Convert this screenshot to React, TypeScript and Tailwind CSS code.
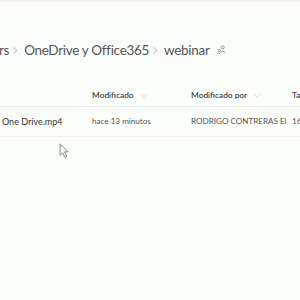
import { ChevronDown } from 'lucide-react';

function Chevron() {
  return <ChevronDown className="ml-[5px] h-[10px] w-[10px] text-[#c4c4c4]" strokeWidth={1.25} />;
}

function Sep() {
  return (
    <svg viewBox="0 0 8 12" className="ml-[4px] mr-[6px] h-[9px] w-[5px] text-[#777]">
      <path d="M1.5 1 L6 6 L1.5 11" fill="none" stroke="currentColor" strokeWidth="1" />
    </svg>
  );
}

function ShareIcon() {
  return (
    <svg viewBox="0 0 12 12" className="ml-[6px] h-[10px] w-[10px] text-[#777]">
      <circle cx="8" cy="3" r="1.8" fill="none" stroke="currentColor" strokeWidth="0.9" />
      <path d="M5 9 Q8 5.5 11 9" fill="none" stroke="currentColor" strokeWidth="0.9" />
      <circle cx="4" cy="6.5" r="1.3" fill="none" stroke="currentColor" strokeWidth="0.9" />
      <path d="M1 11 Q3 8.5 5 10" fill="none" stroke="currentColor" strokeWidth="0.9" />
    </svg>
  );
}

function Cursor() {
  return (
    <svg viewBox="0 0 12 18" className="absolute left-[59px] top-[143px] h-[16px] w-[11px]">
      <path d="M1 1 L1 14 L4 11 L6.5 16 L8.5 15 L6 10 L10 10 Z" fill="#fff" stroke="#777" strokeWidth="1" strokeLinejoin="round" />
    </svg>
  );
}

export default function App() {
  return (
    <div className="relative h-[300px] w-[300px] overflow-hidden bg-[#fbfdfb] font-['Lato',sans-serif]">
      <div className="h-[2px] bg-[#f3f0ee]" />

      {/* Breadcrumb */}
      <div className="mt-[36px] flex h-[24px] items-center whitespace-nowrap text-[13.5px] tracking-[-0.3px] text-[#555]">
        <span className="-ml-[1px]">rs</span>
        <Sep />
        <span>OneDrive y Office365</span>
        <Sep />
        <span>webinar</span>
        <ShareIcon />
      </div>

      {/* Column headers */}
      <div className="mt-[28px] flex h-[17px] items-center whitespace-nowrap border-b border-[#ececec] pb-[5px] text-[8.3px] font-semibold text-[#444]">
        <div className="w-[92px] shrink-0" />
        <div className="flex w-[99px] shrink-0 items-center">
          Modificado
          <Chevron />
        </div>
        <div className="flex w-[101px] shrink-0 items-center">
          Modificado por
          <Chevron />
        </div>
        <div className="shrink-0">Tamaño</div>
      </div>

      {/* Row */}
      <div className="flex h-[30px] items-center whitespace-nowrap border-b border-[#f3f0ee] text-[8.1px] text-[#555]">
        <div className="w-[92px] shrink-0 pl-[2px] text-[9px] text-[#333]">One Drive.mp4</div>
        <div className="w-[99px] shrink-0 overflow-hidden">hace 13 minutos</div>
        <div className="mr-[6px] w-[95px] shrink-0 overflow-hidden">RODRIGO CONTRERAS ELVIRA</div>
        <div className="shrink-0">16 MB</div>
      </div>

      <Cursor />
    </div>
  );
}
